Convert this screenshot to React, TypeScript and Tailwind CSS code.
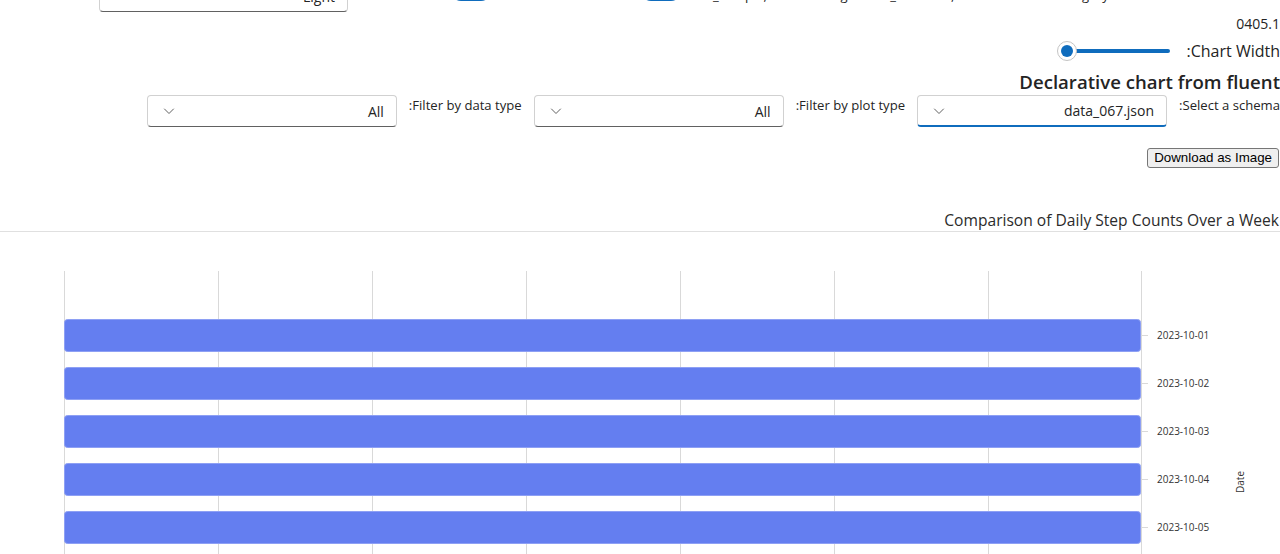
import React from "react";

const font = { fontFamily: '"Open Sans", "Noto Sans", sans-serif' };

const dates = ["2023-10-01", "2023-10-02", "2023-10-03", "2023-10-04", "2023-10-05"];
const gridX = [64, 218, 372, 526, 680, 834, 988, 1141];

function Chevron() {
  return (
    <svg width="12" height="12" viewBox="0 0 12 12" fill="none" className="shrink-0">
      <path d="M1.5 4l4.5 4.5L10.5 4" stroke="#616161" strokeWidth="1" strokeLinecap="round" strokeLinejoin="round" />
    </svg>
  );
}

function Dropdown({ value, focused = false }: { value: string; focused?: boolean }) {
  return (
    <div
      className={`flex h-8 w-[250px] shrink-0 items-center justify-between rounded-[4px] border border-[#d1d1d1] bg-white pl-[15px] pr-[12px] ${
        focused ? "border-b-2 border-b-[#0f6cbd]" : "border-b-[#616161]"
      }`}
    >
      <span className="text-[14px] text-[#242424]">{value}</span>
      <Chevron />
    </div>
  );
}

function Filter({ label, value, focused }: { label: string; value: string; focused?: boolean }) {
  return (
    <div className="flex items-start gap-[12px]">
      <span className="whitespace-nowrap text-[13.1px] leading-[20px] text-[#242424]">{label}</span>
      <Dropdown value={value} focused={focused} />
    </div>
  );
}

function Switch() {
  return (
    <div className="flex h-5 w-10 items-center justify-end rounded-full bg-[#0f6cbd] px-[3px]">
      <div className="h-[14px] w-[14px] rounded-full bg-white" />
    </div>
  );
}

function Chart() {
  return (
    <svg width="1280" height="323" viewBox="0 0 1280 323" className="block">
      {gridX.map((x) => (
        <line key={x} x1={x + 0.5} x2={x + 0.5} y1={39} y2={323} stroke="#d9d9d9" strokeWidth="1" />
      ))}
      {dates.map((d, i) => {
        const y = 87 + i * 48;
        return (
          <g key={d}>
            <rect x={64.5} y={y + 0.5} width={1076} height={32} rx={3} fill="#647ef0" stroke="#8ea0f4" strokeWidth="1" />
            <line x1={1141} x2={1148} y1={y + 16.5} y2={y + 16.5} stroke="#d9d9d9" />
            <text x={1157} y={y + 20} fontSize="10" fill="#333" style={font}>
              {d}
            </text>
          </g>
        );
      })}
      <text
        x={1244}
        y={250}
        fontSize="10"
        fill="#333"
        textAnchor="middle"
        transform="rotate(-90 1244 250)"
        style={font}
      >
        Date
      </text>
    </svg>
  );
}

export default function App() {
  return (
    <div className="h-[554px] w-[1280px] overflow-hidden bg-white text-[#242424]" style={font}>
      {/* top row, mostly scrolled out of view */}
      <div className="-mt-[21px] flex h-[33px] items-end" dir="ltr">
        <div className="ml-[99px] flex h-8 w-[249px] items-center justify-between rounded-[4px] border border-[#d1d1d1] border-b-[#616161] pl-[15px] pr-[12px]">
          <Chevron />
          <span className="text-[14px]">Light</span>
        </div>
        <div className="mb-[11px] ml-[103px]">
          <Switch />
        </div>
        <div className="mb-[11px] ml-[150px]">
          <Switch />
        </div>
        <span className="mb-[7px] ml-[9px] whitespace-nowrap text-[13px] leading-[20px]">
          Use_Sample, Show the legends Is_Rounded, Shade the chart category
        </span>
      </div>

      <div dir="rtl" className="flex flex-col">
        <div className="mt-[2px] text-[14px] leading-[20px]">0405.1</div>

        <div className="mt-[6px] flex h-[22px] items-center gap-[17px]">
          <span className="text-[16px]">Chart Width:</span>
          <div dir="ltr" className="flex w-[113px] items-center">
            <div className="relative z-10 flex h-5 w-5 shrink-0 items-center justify-center rounded-full border border-[#c4c4c4] bg-white">
              <div className="h-[12px] w-[12px] rounded-full bg-[#0f6cbd]" />
            </div>
            <div className="-ml-[10px] h-1 flex-1 rounded-full bg-[#0f6cbd]" />
          </div>
        </div>

        <h2 className="mt-[6px] text-[18.6px] font-semibold leading-[27px]">Declarative chart from fluent</h2>

        <div className="flex items-start gap-[12px]">
          <Filter label="Select a schema:" value="data_067.json" focused />
          <Filter label="Filter by plot type:" value="All" />
          <Filter label="Filter by data type:" value="All" />
        </div>

        <div className="mt-[21px] flex">
          <button
            className="ml-0 mr-[1px] h-[20px] rounded-[3px] border border-[#767676] bg-[#efefef] px-[6px] text-[13.33px] leading-[16px] text-black"
            style={{ fontFamily: '"Liberation Sans", Arial, sans-serif' }}
          >
            Download as Image
          </button>
        </div>

        <div className="mt-[41px] border-b border-[#e0e0e0] pr-[1px] text-[15.6px] leading-[22px] text-[#2b2b2b]">
          Comparison of Daily Step Counts Over a Week
        </div>
      </div>

      <Chart />
    </div>
  );
}
